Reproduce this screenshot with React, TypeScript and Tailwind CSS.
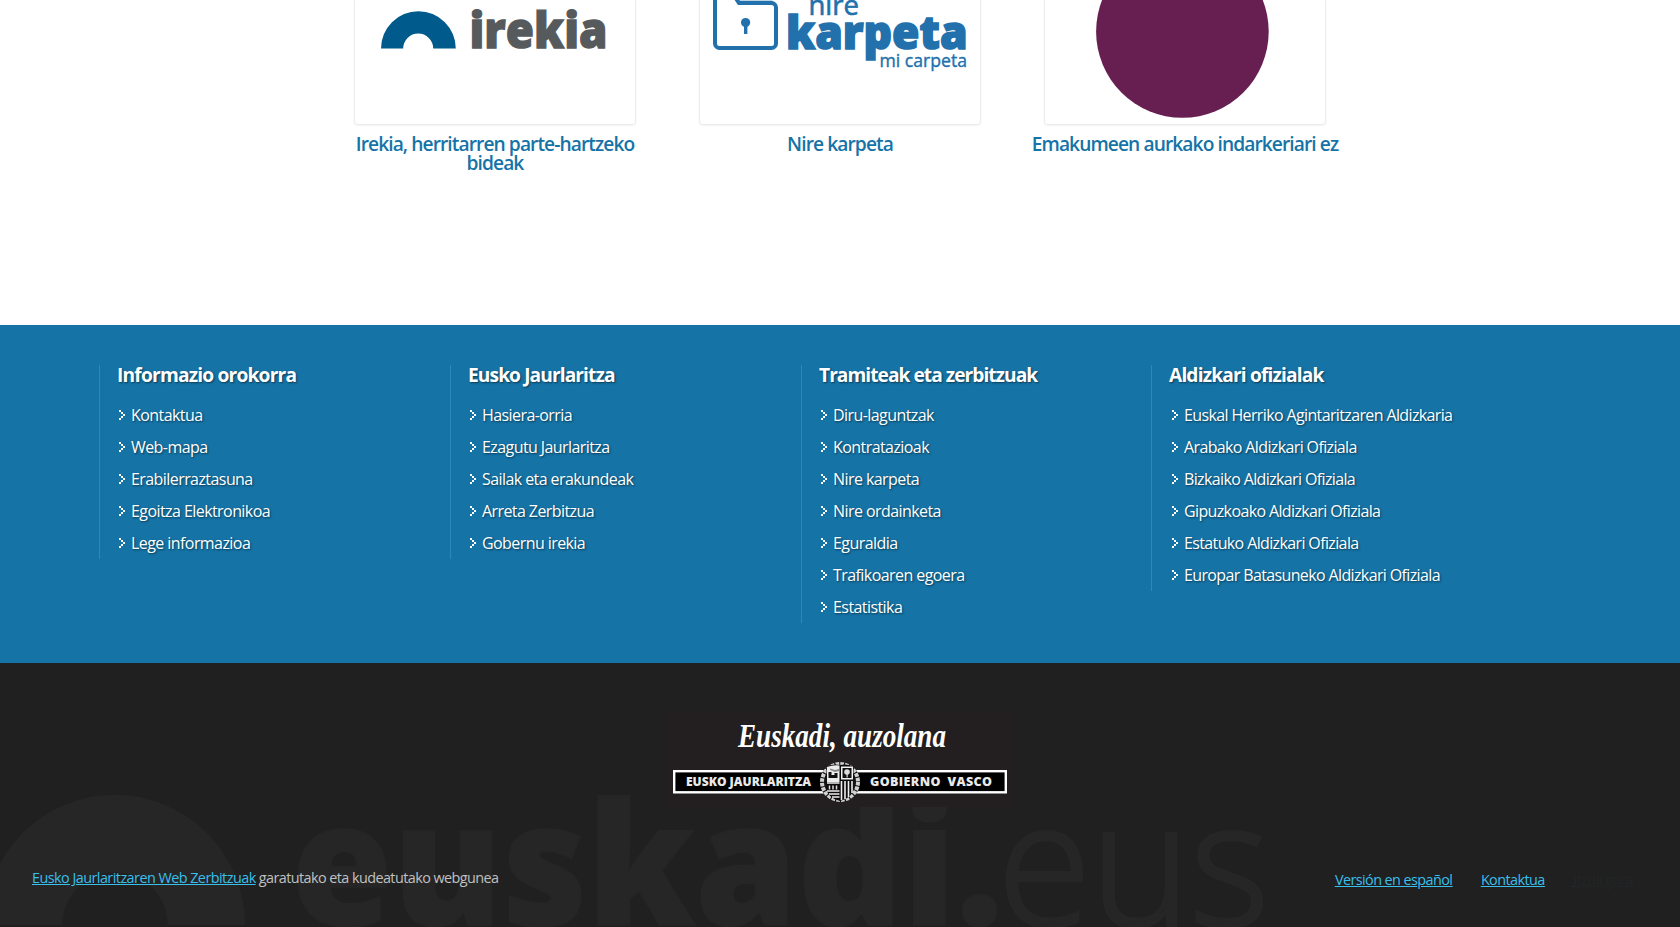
const OS = "'Open Sans', sans-serif";

const columns = [
  {
    title: "Informazio orokorra",
    tracking: "tracking-[-0.82px]",
    indent: "pl-[2px] tracking-[-0.57px]",
    links: ["Kontaktua", "Web-mapa", "Erabilerraztasuna", "Egoitza Elektronikoa", "Lege informazioa"],
  },
  {
    title: "Eusko Jaurlaritza",
    tracking: "tracking-[-0.92px]",
    indent: "pl-[2px] tracking-[-0.58px]",
    links: ["Hasiera-orria", "Ezagutu Jaurlaritza", "Sailak eta erakundeak", "Arreta Zerbitzua", "Gobernu irekia"],
  },
  {
    title: "Tramiteak eta zerbitzuak",
    tracking: "tracking-[-0.98px]",
    indent: "pl-[2px] tracking-[-0.57px]",
    links: ["Diru-laguntzak", "Kontratazioak", "Nire karpeta", "Nire ordainketa", "Eguraldia", "Trafikoaren egoera", "Estatistika"],
  },
  {
    title: "Aldizkari ofizialak",
    tracking: "tracking-[-0.86px]",
    indent: "pl-[3px] tracking-[-0.63px]",
    links: [
      "Euskal Herriko Agintaritzaren Aldizkaria",
      "Arabako Aldizkari Ofiziala",
      "Bizkaiko Aldizkari Ofiziala",
      "Gipuzkoako Aldizkari Ofiziala",
      "Estatuko Aldizkari Ofiziala",
      "Europar Batasuneko Aldizkari Ofiziala",
    ],
  },
];

function Arrow() {
  return (
    <svg width="6" height="10" viewBox="0 0 6 10" fill="#fff" shapeRendering="crispEdges" className="mt-[11px] shrink-0">
      <rect x="0" y="0" width="2" height="2" />
      <rect x="2" y="2" width="2" height="2" />
      <rect x="4" y="4" width="2" height="2" />
      <rect x="2" y="6" width="2" height="2" />
      <rect x="0" y="8" width="2" height="2" />
    </svg>
  );
}

function IrekiaLogo() {
  return (
    <svg width="280" height="123" viewBox="355 0 280 123" fontFamily={OS}>
      <path d="M381 48.600a37.400 37.400 0 0 1 74.800 0h-22.600a15 15 0 0 0-30 0z" fill="#005a8c" />
      <text x="469.500" y="48.300" fontSize="49" fontWeight="800" fill="#565a5d" stroke="#565a5d" strokeWidth="1.300" textLength="138" lengthAdjust="spacingAndGlyphs">irekia</text>
    </svg>
  );
}

function KarpetaLogo() {
  return (
    <svg width="280" height="123" viewBox="700 0 280 123" fontFamily={OS} fill="#2271ad">
      <path d="M738 0h34l2 2h-35z" fill="#b9d3e5" />
      <path d="M715 -5V43.500a4.500 4.500 0 0 0 4.500 4.500H771.500a4.500 4.500 0 0 0 4.500-4.500V7.500a4.500 4.500 0 0 0-4.500-4.500H739L735 -3" fill="none" stroke="#2271ad" strokeWidth="4" />
      <circle cx="745.600" cy="22.500" r="4.600" />
      <rect x="744" y="24" width="3.400" height="10" />
      <text x="808.500" y="14.500" fontSize="27" fontWeight="500" stroke="#2271ad" strokeWidth="0.600" textLength="50.500" lengthAdjust="spacingAndGlyphs">nire</text>
      <text x="786" y="49" fontSize="46.500" fontWeight="800" stroke="#2271ad" strokeWidth="1.600" textLength="181.500" lengthAdjust="spacingAndGlyphs">karpeta</text>
      <text x="879.500" y="66.500" fontSize="18.500" fontWeight="500" stroke="#2271ad" strokeWidth="0.400" textLength="87.500" lengthAdjust="spacingAndGlyphs">mi carpeta</text>
    </svg>
  );
}

function CircleLogo() {
  return (
    <svg width="280" height="123" viewBox="1045 0 280 123">
      <circle cx="1182.400" cy="31.500" r="86.300" fill="#671f51" />
    </svg>
  );
}

const services = [
  { title: "Irekia, herritarren parte-hartzeko bideak", Logo: IrekiaLogo },
  { title: "Nire karpeta", Logo: KarpetaLogo },
  { title: "Emakumeen aurkako indarkeriari ez", Logo: CircleLogo },
];

function Emblem() {
  return (
    <g>
      <circle cx="173" cy="71" r="20" fill="#151213" />
      <circle cx="173" cy="71" r="18" fill="none" stroke="#d0d0d0" strokeWidth="4" strokeDasharray="3.600 1.100" />
      <path d="M159.500 55.500q6.500-3 13.500-1.500q7-1.500 13.500 1.500V77q-1 10-13.500 13q-12.500-3-13.500-13z" fill="#0c0a0b" />
      <path d="M160 56q6-2.500 12.500-1.500V71H160z" fill="#ececec" />
      <path d="M161.500 67v-6h3v3h3v-2h3v5z" fill="#111" />
      <path d="M163 57.500l5 1.500 4-1v2l-4 1-5-2z" fill="#888" />
      <rect x="174" y="55.500" width="12" height="13" fill="#f2f2f2" />
      <rect x="175.500" y="57" width="9" height="10" fill="#111" />
      <circle cx="180" cy="61" r="2.800" fill="#ddd" />
      <path d="M179.500 62h1.200v4.500h-1.200z" fill="#ddd" />
      <path d="M160 72h12.500M160 80h12.500M162 83h10.500M165 86h7.500" stroke="#eee" strokeWidth="1.400" />
      <path d="M162.500 74.500v4M166 74.500v4M169.500 74.500v4" stroke="#ddd" strokeWidth="1.500" />
      <path d="M174.500 70v19M178 70v18M181.500 70v16M185 70v12" stroke="#eee" strokeWidth="1.600" />
    </g>
  );
}

function GovernmentLogo() {
  return (
    <svg width="346" height="96" viewBox="0 0 346 96" className="relative">
      <rect width="346" height="96" fill="#231f20" />
      <text x="71" y="35.500" fontFamily="'Liberation Serif', serif" fontSize="33" fontWeight="700" fontStyle="italic" fill="#fff" textLength="208" lengthAdjust="spacingAndGlyphs">Euskadi, auzolana</text>
      <rect x="7.200" y="60.200" width="331.600" height="21.100" fill="#000" stroke="#fff" strokeWidth="2.400" />
      <g fontFamily={OS} fontSize="12.500" fontWeight="800" fill="#e9e9e9">
        <text x="19" y="75" textLength="125" lengthAdjust="spacingAndGlyphs">EUSKO JAURLARITZA</text>
        <text x="203" y="75" textLength="122" lengthAdjust="spacing" wordSpacing="3">GOBIERNO VASCO</text>
      </g>
      <Emblem />
    </svg>
  );
}

function Watermark() {
  return (
    <svg width="1300" height="132" viewBox="0 795 1300 132" className="absolute bottom-0 left-0" fill="#262626" fontFamily={OS}>
      <path d="M-15.500 925a130.300 130.300 0 0 1 260.600 0h-77.500a52.700 52.700 0 0 0-105.400 0z" />
      <text x="291.500" y="925" fontSize="171" fontWeight="800" stroke="#262626" strokeWidth="1.500" textLength="712" lengthAdjust="spacingAndGlyphs">euskadi.</text>
      <text x="998" y="925" fontSize="171" fontWeight="300" stroke="#262626" strokeWidth="4" textLength="271" lengthAdjust="spacingAndGlyphs">eus</text>
    </svg>
  );
}

export default function App() {
  return (
    <div className="flex h-[927px] w-full flex-col overflow-hidden bg-white font-['Open_Sans',sans-serif]">
      <main className="flex h-[325px] shrink-0 justify-center">
        {services.map(({ title, Logo }) => (
          <div key={title} className="flex w-[345px] flex-col items-center">
            <div className="h-[125px] w-[282px] rounded-b-[4px] border border-t-0 border-[#ececec] shadow-[0_1px_2px_rgba(0,0,0,0.05)]">
              <Logo />
            </div>
            <h3 className="mt-[9px] w-[315px] text-center text-[19.2px] leading-[19.2px] font-semibold tracking-[-0.92px] text-[#1573a7]">
              {title}
            </h3>
          </div>
        ))}
      </main>

      <nav className="grid h-[338px] shrink-0 grid-cols-[351px_351px_350px_400px] items-start bg-[#1573a6] pt-10 pl-[99px] text-white [text-shadow:1px_1px_2px_rgba(0,0,0,0.5)]">
        {columns.map((col) => (
          <section key={col.title} className="border-l border-[#2c8abb] pl-[17px]">
            <h2 className={`h-[34px] text-[19.2px] leading-[20px] font-bold ${col.tracking}`}>{col.title}</h2>
            <ul className={col.indent}>
              {col.links.map((l) => (
                <li key={l} className="flex h-8 gap-[6px]">
                  <Arrow />
                  <a className="text-base leading-8 whitespace-nowrap">{l}</a>
                </li>
              ))}
            </ul>
          </section>
        ))}
      </nav>

      <footer className="relative flex flex-1 flex-col items-center bg-[#202020] pt-12">
        <Watermark />
        <GovernmentLogo />
        <div className="relative mt-[61px] flex w-full items-start justify-between pr-[47px] pl-8 text-[14.4px] leading-5 tracking-[-0.57px]">
          <p className="text-[#c0c0c0]">
            <a className="tracking-[-0.54px] text-[#38bfec] underline">Eusko Jaurlaritzaren Web Zerbitzuak</a> garatutako eta kudeatutako webgunea
          </p>
          <div className="mt-[2px] flex gap-[28.500px] text-[#38bfec] underline">
            <a>Versión en español</a>
            <a>Kontaktua</a>
            <a className="text-[#222526]">Itzuli gora</a>
          </div>
        </div>
      </footer>
    </div>
  );
}
